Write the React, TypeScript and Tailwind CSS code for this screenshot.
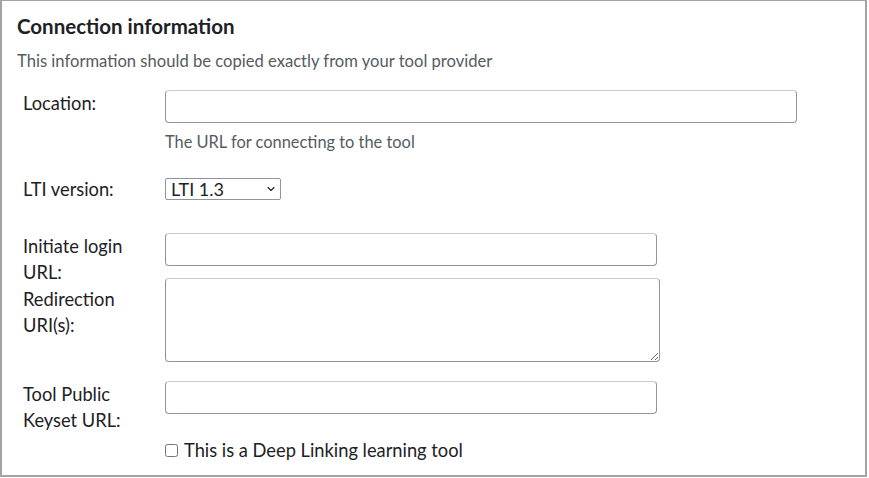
import { ChevronDown } from 'lucide-react';

const inputCls =
  'block h-[33px] rounded-[4px] border border-[#8f959e] border-t-[#c9ccd1] bg-white px-2 text-[16px] outline-none';

export default function App() {
  return (
    <div
      className="w-[867px] h-[477px] border-l-2 border-r-2 border-b-2 border-t border-[#a3a3a3] bg-white text-[#1d2125]"
      style={{ fontFamily: 'Lato, "Open Sans", sans-serif' }}
    >
      <div className="pl-[15px] pt-[13px]">
        <h3 className="text-[20.5px] font-bold leading-[24px]">Connection information</h3>
        <p className="mt-[13px] text-[16.6px] leading-[20px] text-[#555b61]">
          This information should be copied exactly from your tool provider
        </p>
      </div>

      <div className="pl-[21px] mt-[19px]">
        {/* Location */}
        <div className="grid grid-cols-[142px_1fr]">
          <label className="text-[18.3px] leading-[26px]">Location:</label>
          <div>
            <input className={`${inputCls} w-[632px]`} />
            <div className="mt-[9px] text-[16.4px] leading-[20px] text-[#555b61]">
              The URL for connecting to the tool
            </div>
          </div>
        </div>

        {/* LTI version */}
        <div className="grid grid-cols-[142px_1fr] mt-[24px] items-center">
          <label className="text-[18.3px] leading-[26px]">LTI version:</label>
          <div className="relative w-[116px] h-[22px]">
            <select className="h-[22px] w-[116px] appearance-none rounded-[2px] border border-[#8f959e] bg-white pl-[5px] text-[18px] leading-[20px] outline-none">
              <option>LTI 1.3</option>
            </select>
            <ChevronDown
              className="pointer-events-none absolute right-[4px] top-[5px] h-[12px] w-[12px] text-[#222]"
              strokeWidth={2.2}
            />
          </div>
        </div>

        {/* Initiate login URL */}
        <div className="grid grid-cols-[142px_1fr] mt-[31px] h-[45px]">
          <label className="text-[18.3px] leading-[26px]">
            Initiate login
            <br />
            URL:
          </label>
          <input className={`${inputCls} w-[492px]`} />
        </div>

        {/* Redirection URI(s) */}
        <div className="grid grid-cols-[142px_1fr]">
          <label className="pt-[8px] text-[18.3px] leading-[26px]">
            Redirection
            <br />
            URI(s):
          </label>
          <textarea className="block h-[84px] w-[495px] resize-y rounded-[4px] border border-[#8f959e] border-t-[#c9ccd1] bg-white outline-none" />
        </div>

        {/* Tool Public Keyset URL */}
        <div className="grid grid-cols-[142px_1fr] mt-[19px]">
          <label className="text-[18.3px] leading-[26px]">
            Tool Public
            <br />
            Keyset URL:
          </label>
          <input className={`${inputCls} w-[492px] h-[32px]`} />
        </div>

        {/* Deep linking */}
        <div className="grid grid-cols-[142px_1fr] mt-[4px]">
          <div />
          <label className="flex items-center gap-[6px] text-[18.3px] leading-[26px]">
            <input type="checkbox" className="h-[13px] w-[13px] m-0" />
            This is a Deep Linking learning tool
          </label>
        </div>
      </div>
    </div>
  );
}
